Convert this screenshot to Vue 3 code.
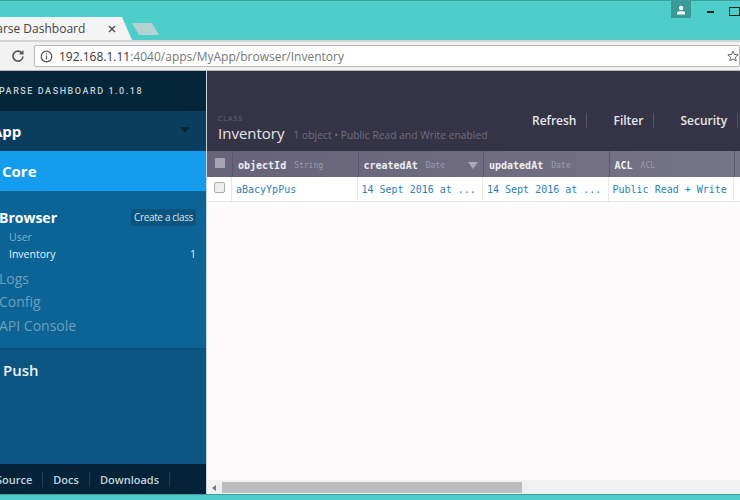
<script setup>
const columns = [
  { name: 'objectId', type: 'String', value: 'aBacyYpPus' },
  { name: 'createdAt', type: 'Date', value: '14 Sept 2016 at ...', sorted: true },
  { name: 'updatedAt', type: 'Date', value: '14 Sept 2016 at ...' },
  { name: 'ACL', type: 'ACL', value: 'Public Read + Write' }
]
const actions = ['Refresh', 'Filter', 'Security']
const footerLinks = ['Source', 'Docs', 'Downloads']
</script>

<template>
  <div class="window">
    <div class="titlebar">
      <div class="tab">
        <span class="tab-title">Parse Dashboard</span>
        <svg class="tab-close" width="8" height="8" viewBox="0 0 8 8"><path d="M1 1l6 6M7 1l-6 6" stroke="#555" stroke-width="1.5" /></svg>
      </div>
      <div class="new-tab"></div>
      <div class="window-controls">
        <div class="avatar">
          <svg width="10" height="10" viewBox="0 0 10 10"><circle cx="5" cy="3" r="2.2" fill="#fff" /><path d="M1 9.500V7.800Q1 6.500 3 6.200h4Q9 6.500 9 7.800v1.700z" fill="#fff" /></svg>
        </div>
        <div class="minimize"></div>
        <div class="maximize"></div>
      </div>
    </div>

    <div class="toolbar">
      <svg class="reload" width="14" height="14" viewBox="0 0 14 14"><path d="M11.300 4.500A5 5 0 1 0 12 7.500" fill="none" stroke="#555" stroke-width="1.600" /><path d="M12.500 1v4.500H8z" fill="#555" /></svg>
      <div class="address">
        <svg width="13" height="13" viewBox="0 0 13 13"><circle cx="6.500" cy="6.500" r="5.300" fill="none" stroke="#555" stroke-width="1.200" /><path d="M6.500 5.500v4M6.500 3.200v1.200" stroke="#555" stroke-width="1.200" /></svg>
        <span class="url"><span class="host">192.168.1.11</span>:4040/apps/MyApp/browser/Inventory</span>
        <svg class="star" width="12" height="12" viewBox="0 0 12 12"><path d="M6 1l1.500 3.400 3.700.4-2.800 2.400.8 3.600L6 9l-3.200 1.800.8-3.600L.8 4.800l3.700-.4z" fill="none" stroke="#666" /></svg>
      </div>
    </div>

    <div class="main">
      <aside class="sidebar">
        <div class="brand">PARSE DASHBOARD 1.0.18</div>
        <div class="app-select">
          <span>App</span>
          <i class="caret"></i>
        </div>
        <div class="core">Core</div>
        <nav class="core-links">
          <div class="browser-row">
            <span>Browser</span>
            <span class="create-class">Create a class</span>
          </div>
          <div class="class-link">User</div>
          <div class="class-link current"><span>Inventory</span><span>1</span></div>
          <div class="nav-links">
            <div>Logs</div>
            <div>Config</div>
            <div>API Console</div>
          </div>
        </nav>
        <div class="push">Push</div>
        <footer class="side-footer">
          <span v-for="link in footerLinks" :key="link">{{ link }}</span>
        </footer>
      </aside>

      <section class="content">
        <header class="class-bar">
          <div class="class-info">
            <div class="class-label">CLASS</div>
            <div class="class-title">
              <span class="class-name">Inventory</span>
              <span class="class-sub">1 object • Public Read and Write enabled</span>
            </div>
          </div>
          <div class="actions">
            <span v-for="action in actions" :key="action" class="action">{{ action }}</span>
          </div>
        </header>

        <div class="table-head">
          <div class="check-col"><i class="head-check"></i></div>
          <div v-for="col in columns" :key="col.name" class="head-cell">
            <b>{{ col.name }}</b>
            <span>{{ col.type }}</span>
            <i v-if="col.sorted" class="sort"></i>
          </div>
          <div class="head-cell"></div>
        </div>
        <div class="table-row">
          <div class="check-col"><i class="row-check"></i></div>
          <div v-for="col in columns" :key="col.name" class="cell">{{ col.value }}</div>
          <div class="cell"></div>
        </div>

        <div class="table-empty"></div>

        <div class="scrollbar">
          <i class="arrow"></i>
          <div class="thumb"></div>
        </div>
      </section>
    </div>
    <div class="bottom-edge"></div>
  </div>
</template>

<style>
html, body {
  margin: 0;
  overflow: hidden;
}
</style>

<style scoped>
.window {
  width: 754px;
  height: 500px;
  margin-left: -14px;
  display: flex;
  flex-direction: column;
  font-family: "Open Sans", sans-serif;
  background: #4ececb;
}

.titlebar {
  height: 40px;
  box-sizing: border-box;
  border-top: 1px solid #3a9e9b;
  display: flex;
  align-items: flex-end;
  flex: none;
}

.tab {
  width: 146px;
  height: 23px;
  box-sizing: border-box;
  padding: 0 9px 0 0;
  display: flex;
  align-items: center;
  justify-content: space-between;
  background: #f4f4f4;
  clip-path: polygon(0 0, 136px 0, 146px 100%, 0 100%);
}

.tab-title {
  margin-left: 3px;
  padding-right: 0;
  font-size: 12px;
  color: #444;
}

.tab-close {
  margin-right: 7px;
}

.new-tab {
  width: 27px;
  height: 12px;
  margin: 0 0 5px 0;
  background: #b3d2d2;
  clip-path: polygon(0 0, 20px 0, 27px 100%, 7px 100%);
}

.window-controls {
  margin-left: auto;
  align-self: flex-start;
  display: flex;
  align-items: flex-start;
}

.avatar {
  width: 20px;
  height: 17px;
  display: flex;
  align-items: center;
  justify-content: center;
  background: #3a9a98;
}

.minimize {
  width: 7px;
  height: 2px;
  margin: 10px 0 0 16px;
  background: #222;
}

.maximize {
  width: 9px;
  height: 7px;
  margin: 6px 0 0 15px;
  border: 1px solid #222;
}

.toolbar {
  height: 31px;
  box-sizing: border-box;
  flex: none;
  display: flex;
  align-items: center;
  padding: 0 0 0 25px;
  background: #f2f2f2;
  border-top: 2px solid #d4d4d4;
  border-bottom: 1px solid #bbb;
}

.reload {
  flex: none;
}

.address {
  flex: 1;
  height: 22px;
  box-sizing: border-box;
  margin-left: 9px;
  padding-left: 5px;
  display: flex;
  align-items: center;
  gap: 6px;
  background: #fff;
  border: 1px solid #b8b8b8;
  border-radius: 2px;
}

.url {
  font-size: 12px;
  color: #777;
}

.host {
  color: #333;
}

.star {
  margin-left: auto;
  margin-right: 0;
}

.main {
  flex: 1;
  min-height: 0;
  display: flex;
}

.sidebar {
  width: 221px;
  flex: none;
  display: flex;
  flex-direction: column;
  background: #0c5582;
  color: #fff;
}

.brand {
  height: 40px;
  padding-left: 13px;
  display: flex;
  align-items: center;
  background: #052639;
  font-family: "Roboto", sans-serif;
  font-size: 9px;
  font-weight: 500;
  letter-spacing: 1.55px;
  color: #c4d0d8;
  white-space: nowrap;
}

.app-select {
  height: 40px;
  box-sizing: border-box;
  padding: 0 14px 0 0;
  display: flex;
  align-items: center;
  justify-content: space-between;
  background: #0a3d5e;
  font-size: 15px;
  font-weight: 700;
}

.app-select span {
  margin-left: 6px;
}

.caret {
  width: 0;
  height: 0;
  margin: 0 0 2px;
  margin-right: 0;
  border: 5px solid transparent;
  border-top: 6px solid #052639;
  border-bottom: 0;
  transform: translateX(-3px);
}

.core {
  height: 40px;
  padding-left: 16px;
  display: flex;
  align-items: center;
  background: #169cee;
  font-size: 15px;
  font-weight: 700;
}

.core-links {
  height: 158px;
  box-sizing: border-box;
  padding: 17px 11px 0 13px;
  background: #0c6396;
  border-bottom: 1px solid #0a4f7b;
}

.browser-row {
  height: 18px;
  display: flex;
  align-items: center;
  justify-content: space-between;
  font-size: 14px;
  font-weight: 700;
}

.create-class {
  width: 65px;
  height: 17px;
  display: flex;
  align-items: center;
  justify-content: center;
  border-radius: 3px;
  background: #0b5480;
  font-size: 10px;
  font-weight: 400;
  letter-spacing: -0.35px;
  color: #d8e6ee;
}

.class-link {
  height: 17px;
  margin-top: 0;
  padding-left: 10px;
  display: flex;
  align-items: center;
  justify-content: space-between;
  font-size: 10.500px;
  color: #85b3cc;
}

.class-link:first-of-type {
  margin-top: 0;
}

.browser-row + .class-link {
  margin-top: 2px;
}

.class-link.current {
  color: #e8f1f6;
}

.nav-links {
  margin-top: 5px;
  font-size: 14px;
  line-height: 23.300px;
  color: #6ea0bc;
}

.push {
  flex: 1;
  padding: 11px 0 0 17px;
  font-size: 15px;
  font-weight: 600;
  color: #e8f3f8;
}

.side-footer {
  height: 30px;
  display: flex;
  align-items: center;
  background: #042338;
  font-size: 11px;
  font-weight: 600;
  color: #c3d3dd;
}

.side-footer span {
  padding: 0 10px;
  border-right: 1px solid #1c3f55;
  line-height: 15px;
}

.content {
  flex: 1;
  min-width: 0;
  display: flex;
  flex-direction: column;
  background: #fcfafb;
  border-left: 1px solid #c8d6de;
  margin-left: -1px;
}

.class-bar {
  height: 80px;
  box-sizing: border-box;
  flex: none;
  padding: 43px 0 0 11px;
  display: flex;
  background: #353446;
}

.class-label {
  font-size: 7px;
  line-height: 9px;
  letter-spacing: 1px;
  color: #66647a;
}

.class-title {
  display: flex;
  align-items: baseline;
  gap: 9px;
  white-space: nowrap;
}

.class-name {
  font-size: 15px;
  line-height: 20px;
  color: #e6e6ea;
}

.class-sub {
  font-size: 10.300px;
  color: #6f6d82;
}

.actions {
  position: absolute;
  display: flex;
  margin-left: 314px;
  margin-top: -1px;
}

.action {
  height: 15px;
  padding-right: 10px;
  margin-right: 26px;
  border-right: 1px solid #55546a;
  font-size: 12px;
  line-height: 15px;
  font-weight: 600;
  color: #e6e6ea;
}

.table-head {
  height: 26px;
  flex: none;
  display: flex;
  background: linear-gradient(90deg, #66637a, #767488);
}

.check-col {
  width: 25px;
  flex: none;
  box-sizing: border-box;
  display: flex;
  align-items: center;
  justify-content: center;
}

.head-check {
  width: 10px;
  height: 10px;
  margin-bottom: 2px;
  background: #a7a5b4;
  border-radius: 1px;
}

.head-cell {
  width: 125.500px;
  flex: none;
  box-sizing: border-box;
  padding: 2px 5px 0;
  display: flex;
  align-items: center;
  gap: 8px;
  border-left: 1px solid #5a576e;
  font-family: "DejaVu Sans Mono", monospace;
  white-space: nowrap;
}

.head-cell b {
  font-size: 10px;
  color: #eeeef2;
}

.head-cell span {
  font-size: 8px;
  color: #9c9aac;
}

.sort {
  width: 0;
  height: 0;
  margin-left: auto;
  border: 5px solid transparent;
  border-top: 7px solid #aaa8b6;
  border-bottom: 0;
}

.table-row {
  height: 25px;
  flex: none;
  display: flex;
  border-bottom: 1px solid #e6e6ec;
  box-sizing: border-box;
  background: #fff;
}

.table-row .check-col {
  border-right: 1px solid #e6e6ec;
  width: 25px;
}

.row-check {
  width: 9px;
  height: 9px;
  margin: 0 0 3px;
  background: #eee;
  border: 1px solid #aaa;
  border-radius: 2px;
}

.cell {
  width: 125.500px;
  flex: none;
  box-sizing: border-box;
  padding: 1px 4px 0;
  display: flex;
  align-items: center;
  border-right: 1px solid #e6e6ec;
  font-family: "DejaVu Sans Mono", monospace;
  font-size: 10px;
  color: #2b7fb8;
  white-space: nowrap;
}

.table-empty {
  flex: 1;
}

.scrollbar {
  height: 14px;
  flex: none;
  padding-top: 2px;
  box-sizing: border-box;
  display: flex;
  align-items: flex-start;
  background: #f0f0f0;
}

.arrow {
  width: 0;
  height: 0;
  margin: 3px 0 0 5px;
  border: 3px solid transparent;
  border-right: 4px solid #777;
  border-left: 0;
}

.thumb {
  width: 300px;
  height: 11px;
  margin-left: 6px;
  background: #bdbdbd;
}

.bottom-edge {
  height: 6px;
  flex: none;
  box-sizing: border-box;
  background: #4ececb;
  border-top: 1px solid #3a9e9b;
}
</style>
